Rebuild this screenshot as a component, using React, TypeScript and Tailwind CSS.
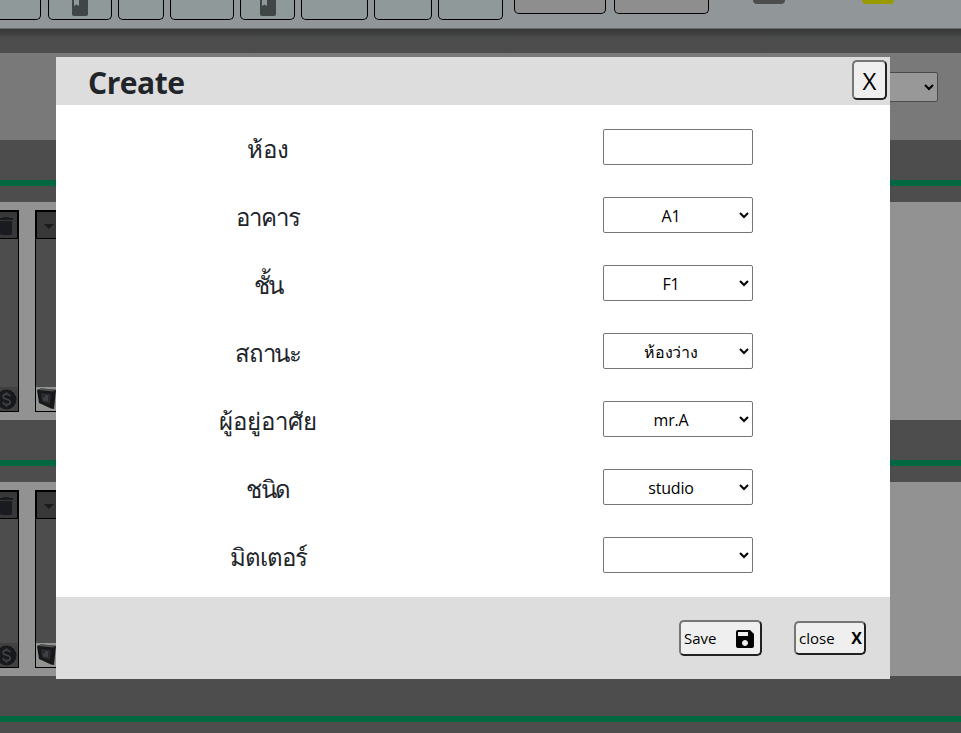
import { MdDelete, MdSave, MdArrowDropDown } from "react-icons/md";

const navButtons = [
  { box: "w-[41px]", icon: false },
  { box: "w-16 ml-[7px]", icon: true },
  { box: "w-[46px] ml-1.5", icon: false },
  { box: "w-16 ml-1.5", icon: false },
  { box: "w-[55px] ml-1.5", icon: true },
  { box: "w-[67px] ml-1.5", icon: false },
  { box: "w-[58px] ml-1.5", icon: false },
  { box: "w-[65px] ml-1.5", icon: false },
];

const fields = [
  { label: "ห้อง", value: null, tracking: "" },
  { label: "อาคาร", value: "A1", tracking: "tracking-[-1.1px]" },
  { label: "ชั้น", value: "F1", tracking: "tracking-[-1.5px]" },
  { label: "สถานะ", value: "ห้องว่าง", tracking: "tracking-[-1.3px]" },
  { label: "ผู้อยู่อาศัย", value: "mr.A", tracking: "tracking-[-0.1px]" },
  { label: "ชนิด", value: "studio", tracking: "tracking-[-1.5px]" },
  { label: "มิตเตอร์", value: "", tracking: "tracking-[-1px]" },
];

function BookIcon() {
  return (
    <svg width="16" height="16" viewBox="0 0 16 16" className="block">
      <path d="M0 0H16V14Q16 16 14 16H2Q0 16 0 14Z" fill="#404545" />
      <path d="M2 0H7V6L4.500 4.500L2 6Z" fill="#8f999a" />
    </svg>
  );
}

function DollarIcon() {
  return (
    <svg width="21" height="21" viewBox="0 0 21 21" className="block shrink-0">
      <circle cx="10.500" cy="10.500" r="10" fill="#17191d" />
      <path
        d="M14 7.200C13.500 5.800 12.200 5.200 10.500 5.200C8.500 5.200 7.200 6.200 7.200 7.700C7.200 11.200 14.200 9.300 14.200 13C14.200 14.700 12.700 15.700 10.600 15.700C8.700 15.700 7.200 14.900 6.900 13.200M10.500 3.200V5.200M10.500 15.700V17.700"
        fill="none"
        stroke="#414141"
        strokeWidth="1.700"
      />
    </svg>
  );
}

function MeterIcon() {
  return (
    <svg width="21" height="24" viewBox="0 0 21 24" className="block shrink-0">
      <path d="M1 3L5 1.500L20 3L18 22L15 21.500L3 16Z" fill="#161718" />
      <path d="M2 3L6 1.500L20 2.500L17 4.500Z" fill="#4c5050" />
      <path d="M5 6L15 7L14 17L6 14.500Z" fill="#292b2e" />
      <path d="M7 11L9 10V8.500L12 8V14L7 13.500Z" fill="#3e4042" />
    </svg>
  );
}

function RoomRow({ height }: { height: string }) {
  return (
    <div className={`flex shrink-0 py-2 bg-[#929292] ${height}`}>
      <div className="flex w-[19px] flex-col border border-l-0 border-black bg-[#4d4d4d]">
        <div className="flex h-7 shrink-0 items-center justify-end border border-l-0 border-black bg-[#383838] pt-0.5">
          <MdDelete size={24} color="#191b1f" className="-mr-px shrink-0" />
        </div>
        <div className="mt-auto flex h-6 items-center justify-end bg-[#414141] pr-[1.5px]">
          <DollarIcon />
        </div>
      </div>
      <div className="ml-4 flex w-[100px] flex-col border border-black bg-[#4d4d4d]">
        <div className="flex h-7 shrink-0 items-center border border-black bg-[#383838] pt-0.5">
          <MdArrowDropDown size={24} color="#191b1f" className="shrink-0" />
        </div>
        <div className="mt-auto flex h-6 bg-[#929492]">
          <MeterIcon />
        </div>
      </div>
    </div>
  );
}

function SectionBar() {
  return (
    <div className="h-[62px] shrink-0 bg-[#4d4d4d] pt-10">
      <div className="h-1.5 bg-[#006841]" />
    </div>
  );
}

function Backdrop() {
  return (
    <div className="flex h-full flex-col bg-[#4d4d4d]">
      <header className="flex h-[29px] shrink-0 items-start border-b border-[#636a6c] bg-[#919699]">
        {navButtons.map((b, i) => (
          <div
            key={i}
            className={`flex h-5 shrink-0 justify-center rounded-b-[5px] border border-t-0 border-black bg-[#8f999a] ${b.box} ${i === 0 ? "border-l-0 rounded-bl-none" : ""}`}
          >
            {b.icon && <BookIcon />}
          </div>
        ))}
        <div className="ml-[11px] h-3.5 w-[92px] shrink-0 rounded-b-[5px] border border-t-0 border-black bg-[#8e8e8e]" />
        <div className="ml-2 h-3.5 w-[95px] shrink-0 rounded-b-[5px] border border-t-0 border-black bg-[#8e8e8e]" />
        <div className="ml-11 h-1 w-8 shrink-0 rounded-b-[5px] bg-[#4d4d4d]" />
        <div className="ml-[77px] h-1 w-8 shrink-0 rounded-b-[5px] bg-[#999900]" />
      </header>
      <div className="h-6 shrink-0 bg-linear-to-b from-[#343736] to-[#4d4d4d] to-40%" />
      <div className="flex h-[87px] shrink-0 justify-end bg-[#797979] pr-[23px] pt-[19px]">
        <select className="h-[30px] w-[150px] rounded-xs border border-[#4b4b4b] bg-[#989898] text-black" />
      </div>
      <SectionBar />
      <RoomRow height="h-[218px]" />
      <SectionBar />
      <RoomRow height="h-[194px]" />
      <SectionBar />
    </div>
  );
}

export default function App() {
  return (
    <div className="relative h-[733px] w-[961px] overflow-hidden font-['Open_Sans','Noto_Sans',sans-serif]">
      <Backdrop />
      <div className="absolute left-14 top-[57px] flex h-[622px] w-[834px] flex-col bg-white text-[#212529]">
        <div className="flex h-12 items-start justify-between bg-[#ddd] pl-8 pr-[3px] pt-[3px]">
          <h1 className="mt-0.5 text-[30px] font-bold leading-[42px] tracking-[-0.45px]">Create</h1>
          <button className="h-10 w-[35px] rounded-[5px] border-2 border-t-[#767676] border-l-[#767676] border-b-[#212121] border-r-[#212121] bg-[#efefef] pt-px text-2xl leading-9 text-black">
            X
          </button>
        </div>
        <div className="flex h-[492px] flex-col gap-8 pt-6">
          {fields.map((f) => (
            <div key={f.label} className="flex h-9 shrink-0">
              <div className={`w-[424px] text-center text-2xl leading-[39px] ${f.tracking}`}>{f.label}</div>
              {f.value === null ? (
                <input className="ml-[123px] h-9 w-[150px] rounded-xs border border-[#767676] bg-white" />
              ) : (
                <select className="ml-[123px] h-9 w-[150px] rounded-xs border border-[#767676] bg-white pr-0.5 pt-0.5 text-center text-base tracking-[-0.2px] text-black">
                  <option>{f.value}</option>
                </select>
              )}
            </div>
          ))}
        </div>
        <div className="flex h-[82px] items-center justify-end bg-[#ddd] pr-6">
          <button className="flex h-9 w-[83px] items-center justify-between rounded-[5px] border-2 border-t-[#767676] border-l-[#767676] border-b-[#212121] border-r-[#212121] bg-[#efefef] px-[3px] text-[15px] text-black">
            <span>Save</span>
            <MdSave size={24} className="mt-0.5" />
          </button>
          <button className="ml-8 flex h-[34px] w-[72px] items-center justify-between rounded-[5px] border-2 border-t-[#767676] border-l-[#767676] border-b-[#212121] border-r-[#212121] bg-[#efefef] pl-[3px] pr-0.5 text-[15px] text-black">
            <span>close</span>
            <span className="text-base font-bold">X</span>
          </button>
        </div>
      </div>
    </div>
  );
}
